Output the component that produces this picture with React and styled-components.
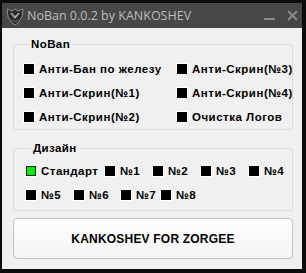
import React from "react";
import styled, { createGlobalStyle } from "styled-components";

const noban = [
  ["Анти-Бан по железу", "Анти-Скрин(№3)"],
  ["Анти-Скрин(№1)", "Анти-Скрин(№4)"],
  ["Анти-Скрин(№2)", "Очистка Логов"],
];

const design = [
  [
    { label: "Стандарт", w: 79, on: true },
    { label: "№1", w: 48 },
    { label: "№2", w: 48 },
    { label: "№3", w: 48 },
    { label: "№4" },
  ],
  [
    { label: "№5", w: 48 },
    { label: "№6", w: 47 },
    { label: "№7", w: 40 },
    { label: "№8" },
  ],
];

const Global = createGlobalStyle`
  body {
    margin: 0;
    background: #0b0b0b;
    font-family: "Liberation Sans", Arial, sans-serif;
  }
`;

const Window = styled.div`
  width: 306px;
  height: 273px;
  box-sizing: border-box;
  padding: 3px 4px 4px 2px;
  background: #0b0b0b;
  display: flex;
  flex-direction: column;
`;

const TitleBar = styled.div`
  height: 25px;
  flex-shrink: 0;
  background: #474747;
  display: flex;
  align-items: center;
  padding-left: 3px;
`;

const Caption = styled.span`
  font-family: "Open Sans", "Noto Sans", sans-serif;
  font-size: 12.5px;
  color: #bcbcbc;
  margin-left: 2px;
  flex: 1;
`;

const Controls = styled.div`
  display: flex;
  align-items: center;
  gap: 11px;
  padding-right: 4px;
`;

const Body = styled.div`
  flex: 1;
  background: #f0f0f0;
  padding: 9px 9px 8px 11px;
  display: flex;
  flex-direction: column;
`;

const Group = styled.fieldset`
  margin: 0 0 ${(p) => p.$gap || 0}px;
  border: 1px solid #dcdcdc;
  border-radius: 3px;
  padding: ${(p) => p.$pad};
  min-width: 0;
`;

const Legend = styled.legend`
  margin-left: 6px;
  padding: 0 2px;
  font-size: 11.5px;
  font-weight: bold;
  letter-spacing: 0.4px;
  line-height: 14px;
  color: #000;
`;

const Grid = styled.div`
  display: grid;
  grid-template-columns: 153px 1fr;
  grid-auto-rows: 24px;
`;

const Row = styled.div`
  display: flex;
  height: 24px;
`;

const Option = styled.div`
  display: flex;
  align-items: center;
  gap: 5px;
  width: ${(p) => (p.$w ? `${p.$w}px` : "auto")};
  flex-shrink: 0;
  font-size: 11.5px;
  font-weight: bold;
  letter-spacing: 0.5px;
  color: #000;
  white-space: nowrap;
`;

const Box = styled.span`
  width: 10px;
  height: 10px;
  flex-shrink: 0;
  background: ${(p) => (p.$on ? "#00f000" : "#000")};
  border: 1px solid ${(p) => (p.$on ? "#1e1e1e" : "#000")};
  box-sizing: border-box;
  outline: 1px solid #fff;
  margin-left: 1px;
`;

const Button = styled.button`
  height: 41px;
  margin: 0;
  border: 1px solid #c2c2c2;
  border-radius: 4px;
  background: linear-gradient(#fefefe, #f4f4f4);
  font-family: "Liberation Sans", Arial, sans-serif;
  font-size: 12px;
  font-weight: bold;
  color: #000;
  letter-spacing: 0.2px;
`;

function Logo() {
  return (
    <svg width="20" height="20" viewBox="0 0 20 20">
      <path d="M2 3 L7 5 L10 3 L13 5 L18 3 L17 11 L13 17 L10 19 L7 17 L3 11 Z" fill="#2b2b2b" stroke="#8d8d8d" strokeWidth="1" />
      <path d="M5 7 L10 13 L15 7 L13 7 L10 10 L7 7 Z" fill="#a5a5a5" />
      <path d="M7 14 L10 16 L13 14" fill="none" stroke="#6a6a6a" strokeWidth="1" />
    </svg>
  );
}

function Check({ label, w, on }) {
  return (
    <Option $w={w}>
      <Box $on={on} />
      {label}
    </Option>
  );
}

export default function App() {
  return (
    <>
      <Global />
      <Window>
        <TitleBar>
          <Logo />
          <Caption>NoBan 0.0.2 by KANKOSHEV</Caption>
          <Controls>
            <svg width="12" height="12" viewBox="0 0 12 12">
              <rect x="0" y="8" width="11" height="2" fill="#8a8a8a" />
            </svg>
            <svg width="11" height="11" viewBox="0 0 11 11">
              <path d="M1 1 L10 10 M10 1 L1 10" stroke="#8a8a8a" strokeWidth="2" />
            </svg>
          </Controls>
        </TitleBar>
        <Body>
          <Group $pad="6px 0 0 9px" $gap={11}>
            <Legend>NoBan</Legend>
            <Grid>
              {noban.flat().map((t) => (
                <Check key={t} label={t} />
              ))}
            </Grid>
          </Group>
          <Group $pad="4px 0 3px 11px" $gap={7}>
            <Legend>Дизайн</Legend>
            {design.map((row, i) => (
              <Row key={i}>
                {row.map((o) => (
                  <Check key={o.label} {...o} />
                ))}
              </Row>
            ))}
          </Group>
          <Button>KANKOSHEV FOR ZORGEE</Button>
        </Body>
      </Window>
    </>
  );
}
